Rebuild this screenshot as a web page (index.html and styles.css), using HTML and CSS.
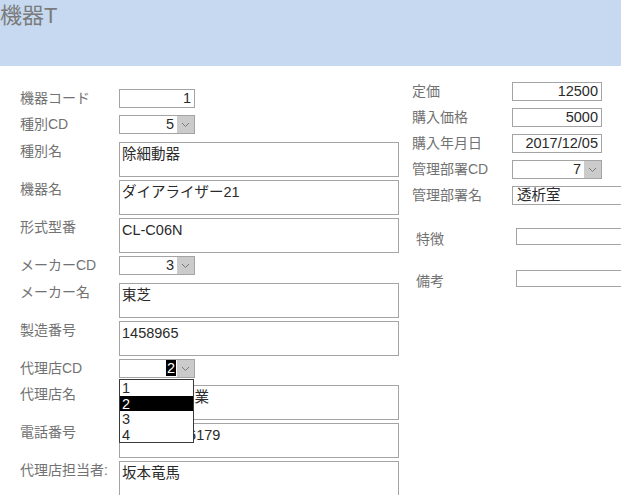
FILE: index.html
```html
<!DOCTYPE html>
<html lang="ja">
<head>
<meta charset="utf-8">
<title>機器T</title>
<link rel="stylesheet" href="styles.css">
</head>
<body>
<div class="header"><h1 class="title">機器T</h1></div>
<div class="main">
  <div class="col-left">
    <div class="row r26"><span class="lbl">機器コード</span><div class="inp num">1</div></div>
    <div class="row r27"><span class="lbl">種別CD</span><div class="sel"><span class="val">5</span><span class="btn"><svg width="9" height="6" viewBox="0 0 9 6"><polyline points="1,1 4.5,4.5 8,1" fill="none" stroke="#7a7a7a" stroke-width="1"/></svg></span></div></div>
    <div class="row rt"><span class="lbl">種別名</span><div class="ta">除細動器</div></div>
    <div class="row rt"><span class="lbl">機器名</span><div class="ta">ダイアライザー21</div></div>
    <div class="row rt"><span class="lbl">形式型番</span><div class="ta">CL-C06N</div></div>
    <div class="row r27"><span class="lbl">メーカーCD</span><div class="sel"><span class="val">3</span><span class="btn"><svg width="9" height="6" viewBox="0 0 9 6"><polyline points="1,1 4.5,4.5 8,1" fill="none" stroke="#7a7a7a" stroke-width="1"/></svg></span></div></div>
    <div class="row rt"><span class="lbl">メーカー名</span><div class="ta">東芝</div></div>
    <div class="row rt"><span class="lbl">製造番号</span><div class="ta">1458965</div></div>
    <div class="row r26"><span class="lbl">代理店CD</span><div class="sel open"><span class="val"><span class="hl">2</span></span><span class="btn"><svg width="9" height="6" viewBox="0 0 9 6"><polyline points="1,1 4.5,4.5 8,1" fill="none" stroke="#7a7a7a" stroke-width="1"/></svg></span>
      <ul class="list">
        <li>1</li>
        <li class="on">2</li>
        <li>3</li>
        <li>4</li>
      </ul>
    </div></div>
    <div class="row rt"><span class="lbl">代理店名</span><div class="ta">日本光電工業</div></div>
    <div class="row rt"><span class="lbl">電話番号</span><div class="ta">048-2345-6179</div></div>
    <div class="row rt"><span class="lbl">代理店担当者:</span><div class="ta">坂本竜馬</div></div>
  </div>
  <div class="col-right">
    <div class="row r26"><span class="lbl">定価</span><div class="inp num rw">12500</div></div>
    <div class="row r26"><span class="lbl">購入価格</span><div class="inp num rw">5000</div></div>
    <div class="row r26"><span class="lbl">購入年月日</span><div class="inp num rw">2017/12/05</div></div>
    <div class="row r26"><span class="lbl">管理部署CD</span><div class="sel rw"><span class="val">7</span><span class="btn"><svg width="9" height="6" viewBox="0 0 9 6"><polyline points="1,1 4.5,4.5 8,1" fill="none" stroke="#7a7a7a" stroke-width="1"/></svg></span></div></div>
    <div class="row r26"><span class="lbl">管理部署名</span><div class="inp wide">透析室</div></div>
    <div class="memo">
      <div class="row rm"><span class="lbl lbl-m">特徴</span><div class="inp mbox"></div></div>
      <div class="row rm"><span class="lbl lbl-m">備考</span><div class="inp mbox"></div></div>
    </div>
  </div>
</div>
</body>
</html>
```

FILE: styles.css
```css
html, body {
  margin: 0;
  padding: 0;
  background: #ffffff;
  overflow: hidden;
}
body {
  width: 621px;
  height: 495px;
  font-family: "Liberation Sans", "Noto Sans CJK JP", sans-serif;
  color: #222222;
}
.header {
  height: 66px;
  background: #c6d9f1;
}
.title {
  margin: 0;
  padding: 3px 0 0 0;
  font-size: 22px;
  line-height: 26px;
  font-weight: normal;
  color: #7b7b7b;
}
.main {
  display: flex;
  align-items: flex-start;
}
.col-left {
  padding: 23px 0 0 20px;
  width: 379px;
  flex: none;
}
.col-right {
  margin-left: 13px;
  padding-top: 16px;
  flex: none;
  width: 209px;
  overflow: hidden;
}
.row {
  display: flex;
  align-items: flex-start;
}
.r26 { height: 26px; }
.r27 { height: 27px; }
.rt { height: 38px; }
.rm { height: 42px; }
.lbl {
  flex: none;
  width: 99px;
  font-size: 14px;
  line-height: 19px;
  color: #727272;
  white-space: nowrap;
  overflow: visible;
}
.col-right .lbl { width: 100px; }
.inp, .ta, .sel {
  box-sizing: border-box;
  border: 1px solid #a4a4a4;
  background: #ffffff;
  font-size: 14.5px;
  color: #2a2a2a;
  white-space: nowrap;
  overflow: hidden;
  flex: none;
}
.inp {
  width: 76px;
  height: 19px;
  line-height: 17px;
  padding: 0 3px;
}
.num { text-align: right; }
.rw { width: 90px; }
.wide { width: 109px; padding: 0 4px; border-right: none; }
.ta {
  width: 280px;
  height: 35px;
  line-height: 19px;
  padding: 2px 2px 0 2px;
}
.sel {
  position: relative;
  width: 76px;
  height: 19px;
  line-height: 17px;
  display: flex;
  overflow: visible;
}
.sel.rw { width: 90px; }
.val {
  flex: 1;
  text-align: right;
  padding-right: 3px;
}
.hl {
  background: #000000;
  color: #ffffff;
  padding: 0 1px;
}
.open .val { padding-right: 1px; }
.btn {
  flex: none;
  width: 17px;
  height: 17px;
  background: #cbcbcb;
  display: flex;
  align-items: center;
  justify-content: center;
}
.list {
  position: absolute;
  left: -1px;
  top: 19px;
  width: 75px;
  box-sizing: border-box;
  margin: 0;
  padding: 0;
  list-style: none;
  border: 1px solid #3a3a3a;
  background: #ffffff;
  z-index: 5;
}
.list li {
  height: 15.5px;
  line-height: 16px;
  padding-left: 2px;
  font-size: 14.5px;
  color: #2a2a2a;
}
.list li.on {
  background: #000000;
  color: #ffffff;
}
.memo {
  margin-top: 16px;
}
.lbl-m {
  padding-left: 4px;
  width: 100px;
  margin-top: 2px;
}
.mbox {
  width: 105px;
  height: 17px;
  border-right: none;
}
```
